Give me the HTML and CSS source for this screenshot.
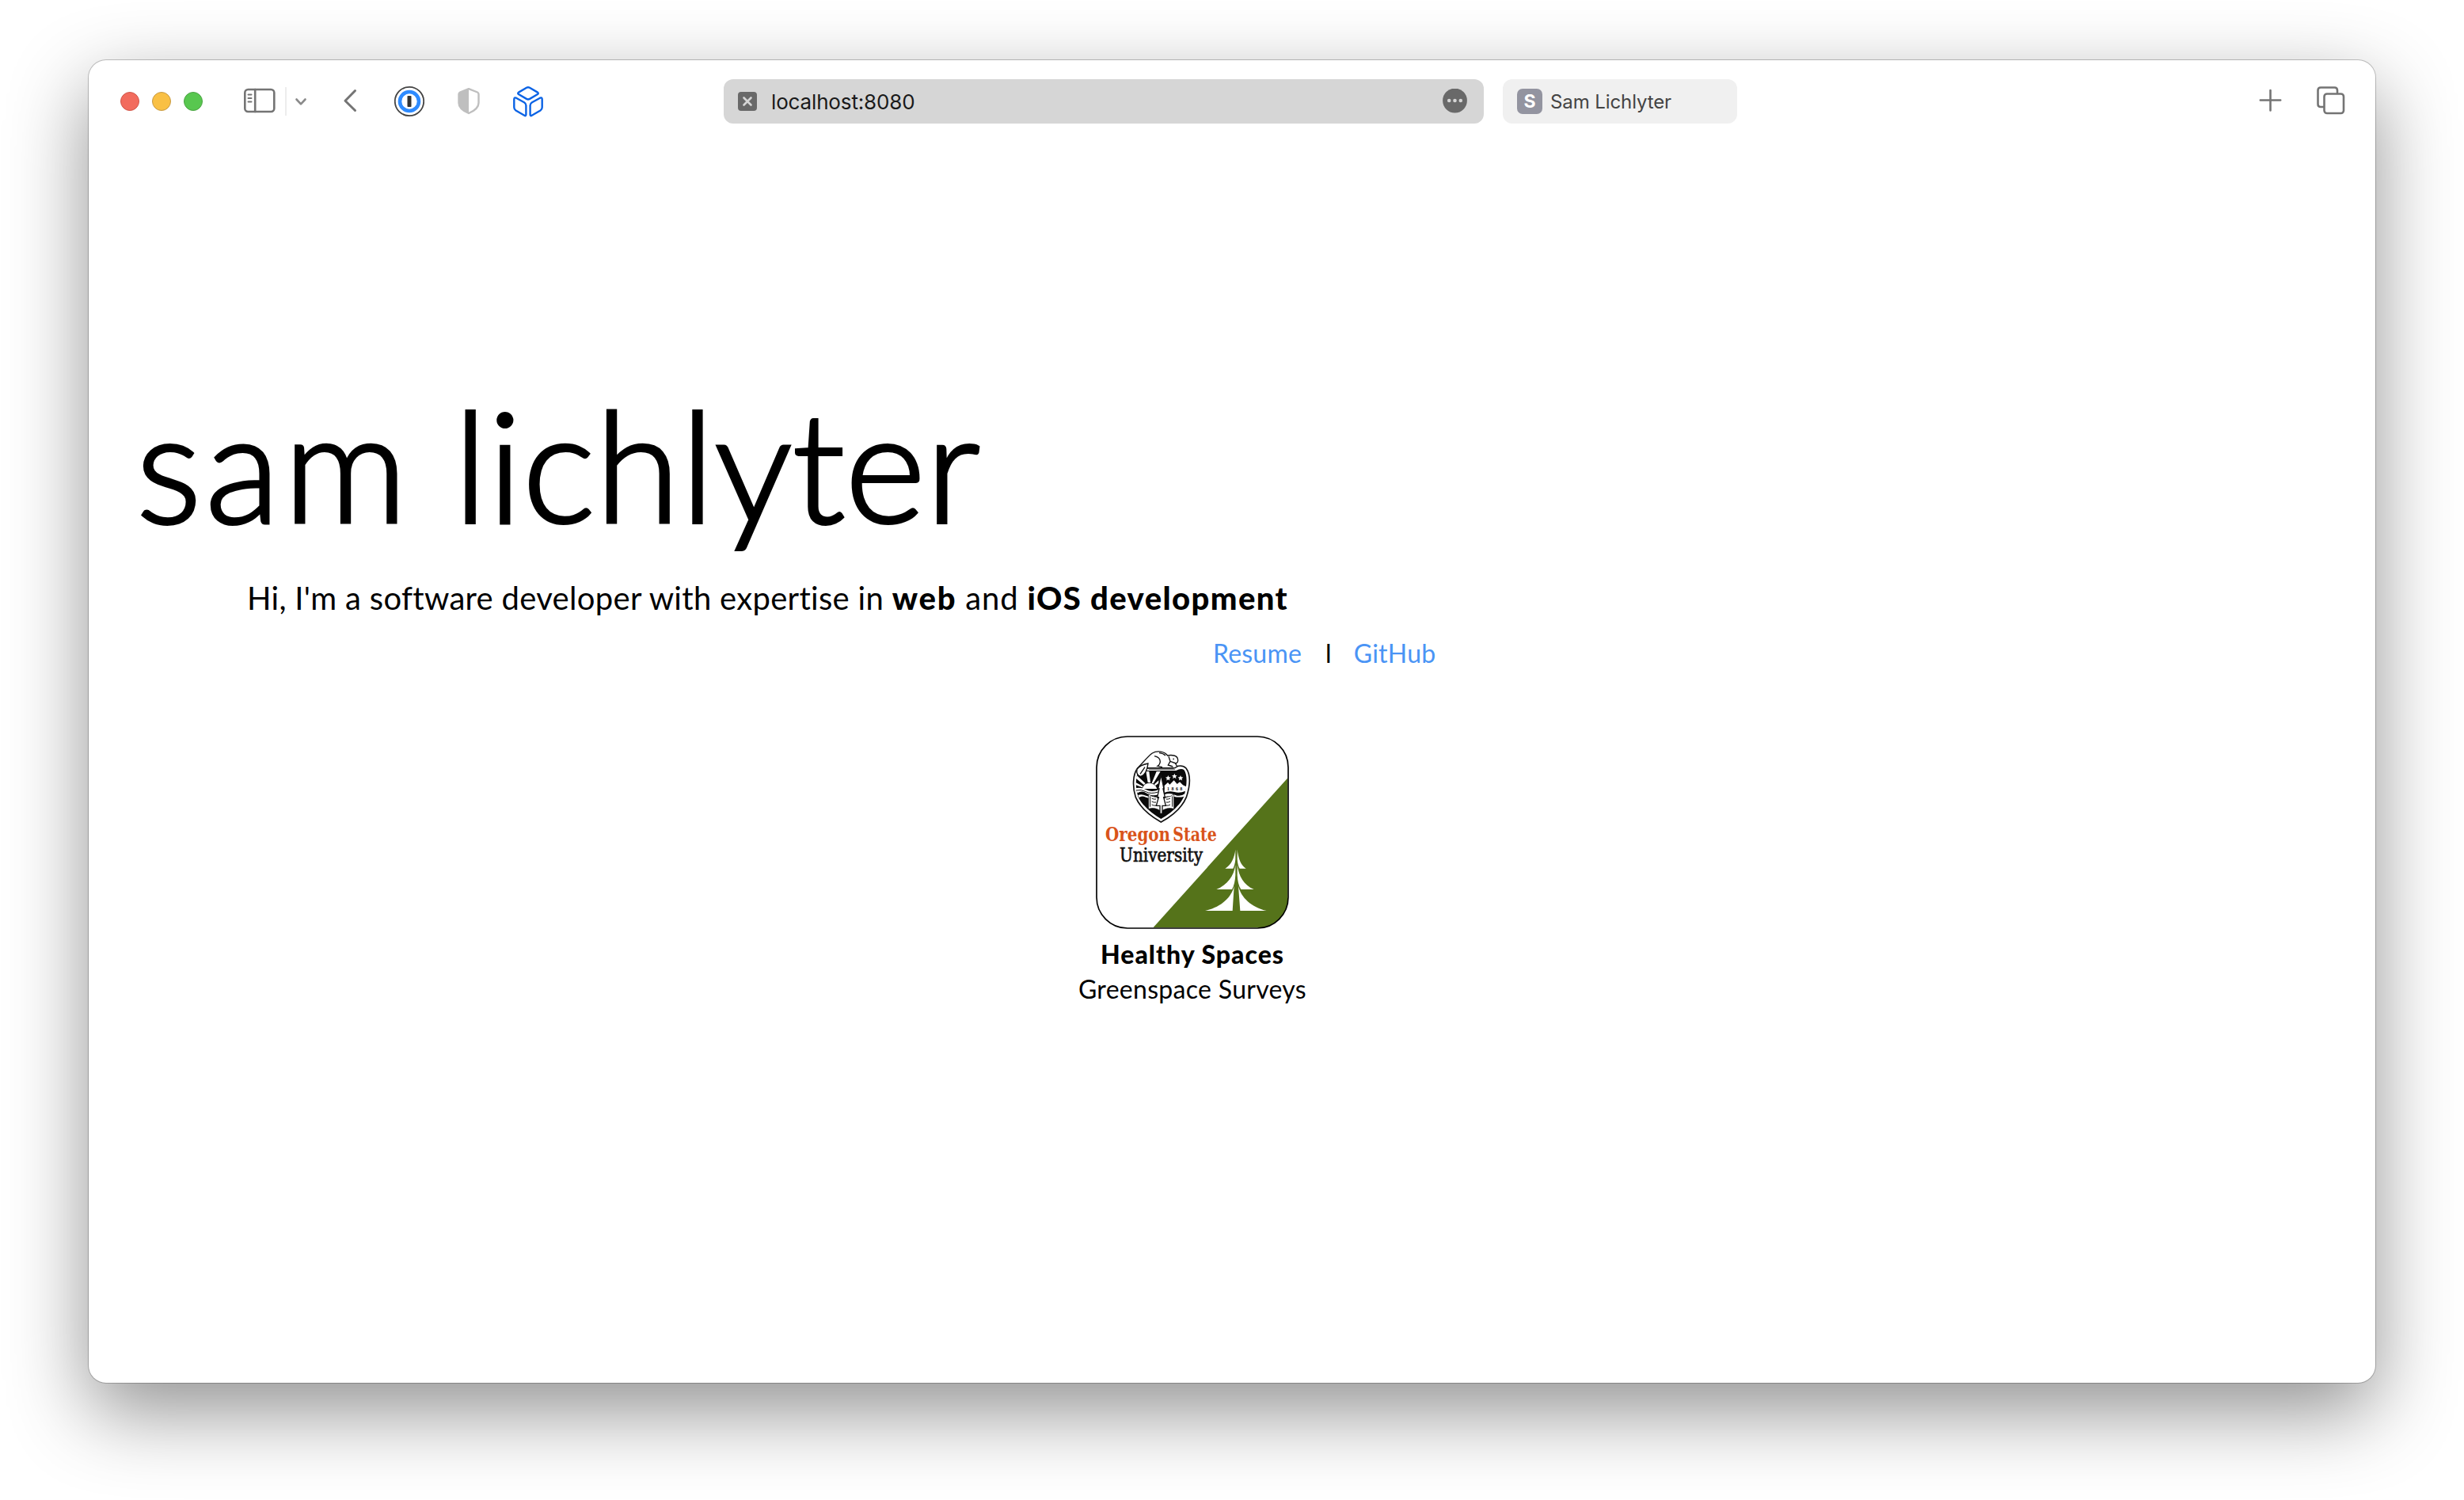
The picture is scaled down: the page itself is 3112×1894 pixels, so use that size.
FILE: index.html
```html
<!DOCTYPE html>
<html lang="en">
<head>
<meta charset="utf-8">
<title>Sam Lichlyter</title>
<link rel="stylesheet" href="styles.css">
</head>
<body>
<div class="window">
  <header class="toolbar">
    <div class="lights"><span class="light red"></span><span class="light yellow"></span><span class="light green"></span></div>
    <svg class="icon sidebar" width="40" height="40" viewBox="0 0 40 40"><rect x="1.3" y="5" width="37" height="28" rx="4" /><path d="M14.2 5V33"/><path class="thin" d="M5.5 11.5h4M5.5 16h4M5.5 20.5h4"/></svg>
    <span class="divider"></span>
    <svg class="icon chevron" width="16" height="40" viewBox="0 0 16 40"><path d="M2.5 17.5L8 23.300L13.500 17.500"/></svg>
    <svg class="icon back" width="18" height="40" viewBox="0 0 18 40"><path d="M15.500 6.500L3 19.200L15.500 31.500"/></svg>
    <svg class="onepass" width="38" height="40" viewBox="0 0 38 40"><circle cx="19" cy="20" r="18.200" fill="#fff" stroke="#444" stroke-width="1.800"/><circle cx="19" cy="20" r="12" fill="#fff" stroke="#2e8bff" stroke-width="4.600"/><rect x="16.500" y="13" width="5" height="14" rx=".8" fill="#333"/></svg>
    <svg class="shield" width="28" height="40" viewBox="0 0 28 40"><path d="M14 4.200L25 8.500Q26.500 9.200 26.500 11V22C26.500 28.500 20 32.500 14 35C8 32.500 1.500 28.500 1.500 22V11Q1.500 9.200 3 8.500Z" fill="none" stroke="#bfbfbf" stroke-width="2.400" stroke-linejoin="round"/><path d="M14 4V35C8 32.500 1.500 28.500 1.500 22V11Q1.500 9.200 3 8.500Z" fill="#bfbfbf"/></svg>
    <svg class="cube" width="38" height="40" viewBox="0 0 38 40"><path d="M17 2.800Q19 1.600 21 2.800L31 8.600Q32.600 9.800 31 11L21 16.900Q19 18 17 16.900L7 11Q5.400 9.800 7 8.600Z"/><path d="M1.300 17.500Q1.300 14.500 4 15.700L14 21.200Q16.400 22.600 16.400 25V36.500Q16.400 39 14.300 37.800L3.500 31.500Q1.300 30 1.300 27.500Z"/><path d="M36.700 17.500Q36.700 14.500 34 15.700L24 21.200Q21.600 22.600 21.600 25V36.500Q21.600 39 23.700 37.800L34.500 31.500Q36.700 30 36.700 27.500Z"/></svg>
    <div class="address">
      <svg width="24" height="24" viewBox="0 0 24 24"><rect width="24" height="24" rx="4" fill="#696969"/><path d="M7.500 7.500L16.500 16.500M16.500 7.500L7.500 16.500" stroke="#d6d6d6" stroke-width="2.600" stroke-linecap="round"/></svg>
      <span class="url">localhost:8080</span>
      <svg class="more" width="31" height="33" viewBox="0 0 31 33"><circle cx="15.500" cy="15" r="15.400" fill="#696969"/><g fill="#d6d6d6"><circle cx="8.200" cy="15" r="2.300"/><circle cx="15.500" cy="15" r="2.300"/><circle cx="22.800" cy="15" r="2.300"/></g></svg>
    </div>
    <div class="tab"><span class="favicon">S</span><span class="tab-title">Sam Lichlyter</span></div>
    <svg class="icon plus" width="29" height="40" viewBox="0 0 29 40"><path d="M14.500 6V31.500M1.800 18.500H27.200"/></svg>
    <svg class="icon overview" width="36" height="40" viewBox="0 0 36 40"><path d="M26 9V6Q26 2.500 22.500 2.500H5Q1.500 2.500 1.500 6V23.500Q1.500 27 5 27H8.500"/><rect x="9.500" y="10.500" width="24.500" height="24.500" rx="3.500"/></svg>
  </header>
  <main class="page">
    <h1 class="name"><span class="first">sam</span> lichlyter</h1>
    <p class="intro"><span class="lead">Hi, I'm a software developer with expertise in </span><b class="web">web</b><span class="and"> and </span><b class="ios">iOS development</b></p>
    <nav class="links"><a>Resume</a><span class="sep">l</span><a>GitHub</a></nav>
    <section class="app">
      <svg class="app-icon" width="244" height="244" viewBox="132 57 732 732">
        <defs><clipPath id="tile"><rect x="135" y="60" width="726" height="726" rx="117"/></clipPath></defs>
        <rect x="135" y="60" width="726" height="726" rx="117" fill="#fff"/>
        <g clip-path="url(#tile)"><path d="M858 218V783H350Z" fill="#55731a"/></g>
        <g fill="#fff">
          <path d="M661 488C657 520 645 546 622 560H652C656 552 660 540 661 525ZM668 488C672 520 680 546 701 560H677C672 552 669 540 668 525Z"/>
          <path d="M661 546C655 590 630 622 589 639H648C656 625 660 605 661 585ZM668 546C674 590 692 622 731 639H682C673 625 669 605 668 585Z"/>
          <path d="M656 626C646 670 606 706 546 720H650ZM672 626C682 670 722 706 779 720H679Z"/>
        </g>
        <path d="M290 180C272 204 270 250 283 290C300 330 340 362 379 384C420 362 458 330 475 290C490 245 492 205 474 180Q460 166 436 174L425 180Z" fill="#fff" stroke="#111" stroke-width="5"/>
        <path d="M294 190C282 215 281 250 292 287C308 322 345 352 379 372C415 352 450 322 466 287C478 245 480 205 466 186Q455 178 436 189H330Z" fill="#0a0a0a"/>
        <g fill="#fff">
          <path d="M329 234L322 192H334L339 234ZM344 236L362 192H377L350 238ZM320 238L288 208L284 218L314 243ZM310 248L283 234V243L308 253ZM354 241L370 226V236L358 246Z"/>
          <path d="M308 258Q314 236 336 236Q358 238 364 258Z"/>
          <path d="M281 256Q302 250 322 261T370 262V280Q344 288 325 275T290 274Z"/>
          <path d="M292 282Q306 276 322 284T366 288V296Q340 298 322 290T296 292Z"/>
          <path d="M392 268V246L405 234L412 242L428 226L440 240L450 232L462 244L475 250L472 266Q450 276 430 270T392 272Z"/>
          <path d="M392 280Q412 272 432 281T470 276L467 287Q448 292 430 288T394 288Z"/>
        </g>
        <path d="M284 264Q304 259 322 269T368 270" fill="none" stroke="#111" stroke-width="3"/>
        <path d="M332 278L344 286Q362 286 379 304Q398 286 416 286L428 278V334Q402 326 379 344Q358 326 332 334Z" fill="#fff" stroke="#111" stroke-width="2"/>
        <path d="M344 294q8 5 16 3M344 306q8 5 16 3M344 318q8 5 16 3M398 297q8 2 16-3M398 309q8 2 16-3M398 321q8 2 16-3M338 286V326M422 286V326" fill="none" stroke="#111" stroke-width="3"/>
        <path d="M379 205L390 258H387L394 290H389L397 322H384V352H375V322H361L370 290H365L372 258H368Z" fill="#fff" stroke="#111" stroke-width="4"/>
        <g fill="#fff"><path id="star" d="M406 207l3 7 7 .5-5.500 5 2 7-6.500-4-6.500 4 2-7-5.500-5 7-.5Z"/><use href="#star" x="24" y="-7"/><use href="#star" x="47"/></g>
        <text class="year" x="402" y="263" textLength="58">1868</text>
        <path d="M290 180C310 160 330 134 346 123C364 112 392 116 404 132C420 128 440 132 442 144C446 154 441 160 434 162L440 174L432 179H328L322 165Z" fill="#fff" stroke="#111" stroke-width="4" stroke-linejoin="round"/>
        <path d="M330 162Q298 168 288 184Q284 206 302 211Q324 206 330 162Z" fill="#fff" stroke="#111" stroke-width="4"/>
        <path d="M300 202L318 176M354 134Q376 138 376 156Q374 168 366 172L384 176M372 122Q388 124 396 132M408 136L414 154L436 162M414 154L406 168L424 174M424 145h5" fill="none" stroke="#111" stroke-width="4"/>
        <path d="M332 184H432" stroke="#777" stroke-width="4"/>
        <text class="osu" x="168" y="455" textLength="246" lengthAdjust="spacingAndGlyphs">Oregon</text>
        <text class="osu" x="424" y="455" textLength="166" lengthAdjust="spacingAndGlyphs">State</text>
        <text class="uni" x="222" y="535" textLength="315" lengthAdjust="spacingAndGlyphs">University</text>
        <rect x="135" y="60" width="726" height="726" rx="117" fill="none" stroke="#000" stroke-width="5"/>
      </svg>
      <b class="app-name">Healthy Spaces</b>
      <span class="app-sub">Greenspace Surveys</span>
    </section>
  </main>
</div>
</body>
</html>
```
FILE: styles.css
```css
* { box-sizing: border-box; }
body { margin: 0; height: 1894px; overflow: hidden; background: #fff; padding: 76px 112px 148px; font-family: Lato, "Liberation Sans", sans-serif; color: #000; }
.window { height: 1670px; background: #fff; border-radius: 22px; box-shadow: 0 0 0 1px rgba(0,0,0,.22), 0 36px 100px rgba(0,0,0,.435); }
.toolbar { height: 104px; display: flex; align-items: center; padding-left: 40px; }
.toolbar > * { flex: none; }
.lights { display: flex; gap: 16px; }
.light { width: 24px; height: 24px; border-radius: 50%; border: 1px solid; }
.red { background: #f26b5d; border-color: #d0574b; }
.yellow { background: #f9c044; border-color: #c79a45; }
.green { background: #58c74f; border-color: #4ba343; }
.icon { fill: none; stroke: #747474; stroke-width: 2.6; stroke-linecap: round; stroke-linejoin: round; }
.icon .thin { stroke-width: 2; }
.sidebar { margin-left: 52px; }
.divider { width: 2px; height: 36px; margin-left: 12px; background: #ededed; }
.chevron { margin-left: 10px; stroke: #8a8a8a; }
.back { margin-left: 45px; stroke-width: 3; }
.onepass { margin-left: 47px; }
.shield { margin-left: 42px; }
.cube { margin-left: 42px; fill: none; stroke: #0b63e5; stroke-width: 2.4; stroke-linejoin: round; }
.address { display: flex; align-items: center; width: 960px; height: 56px; margin-left: 228px; padding: 0 21px 0 18px; border-radius: 12px; background: #d6d6d6; font-family: Inter, sans-serif; font-size: 26px; color: #1a1a1a; }
.url { margin-left: 18px; letter-spacing: -.15px; }
.more { margin-left: auto; }
.tab { display: flex; align-items: center; width: 296px; height: 56px; margin-left: 24px; padding-left: 18px; border-radius: 12px; background: #f0f0f0; font-family: Inter, sans-serif; font-size: 24px; color: #444; }
.favicon { width: 32px; height: 32px; border-radius: 7px; background: #9394a0; color: #fff; font-size: 23px; line-height: 33px; font-weight: 700; text-align: center; }
.tab-title { margin-left: 10px; letter-spacing: -.1px; }
.plus { margin-left: 659px; }
.overview { margin-left: 44px; }
.page { display: flex; flex-direction: column; }
.name { margin: 289px 0 0 60px; font-size: 194px; line-height: 232px; font-weight: 300; letter-spacing: .6px; -webkit-text-stroke: 4px #000; }
.name .first { letter-spacing: 5px; }
.intro { margin: 26px 0 0 200px; font-size: 40px; line-height: 56px; white-space: pre; }
.lead { letter-spacing: .3px; }
.web { letter-spacing: 1.8px; }
.and { letter-spacing: .8px; }
.ios { letter-spacing: 1.4px; }
.intro b, .app-name { font-weight: 900; }
.links { display: flex; margin: 20px 0 0 1420px; font-size: 32px; line-height: 44px; letter-spacing: .2px; }
.links a { color: #4a94f5; }
.sep { margin: 0 28px 0 30px; }
.app { display: flex; flex-direction: column; align-items: center; width: 400px; margin: 82px 0 0 1194px; font-size: 32px; line-height: 44px; }
.app-name { margin-top: 10px; letter-spacing: 1px; }
.app-sub { letter-spacing: .3px; }
.osu { font: 700 73px "DejaVu Serif Condensed", "DejaVu Serif", serif; fill: #d9541a; }
.uni { font: 400 71px "DejaVu Serif Condensed", "DejaVu Serif", serif; fill: #111; stroke: #111; stroke-width: 2px; }
.year { font: 700 18px "Liberation Serif", serif; fill: #111; }
```
